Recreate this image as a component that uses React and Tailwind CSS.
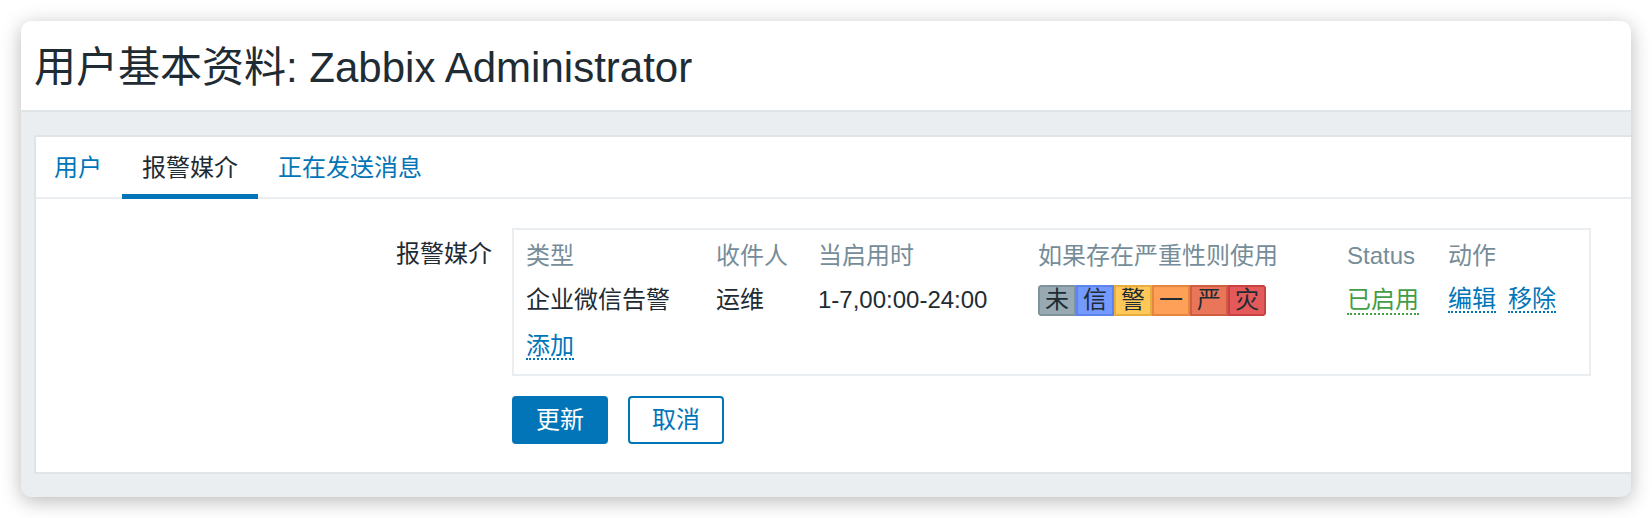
import React from "react";

const severities = [
  { label: "未", className: "bg-[#97aab3] border-[#7f939d]" },
  { label: "信", className: "bg-[#7499ff] border-[#5b84ee]" },
  { label: "警", className: "bg-[#ffc859] border-[#e8ad3f]" },
  { label: "一", className: "bg-[#ffa059] border-[#e5863f]" },
  { label: "严", className: "bg-[#e97659] border-[#cf5d41]" },
  { label: "灾", className: "bg-[#e45959] border-[#c94141]" },
];

const tabs = [
  { label: "用户", active: false },
  { label: "报警媒介", active: true },
  { label: "正在发送消息", active: false },
];

function SeverityBar() {
  return (
    <div className="inline-flex overflow-hidden rounded-[4px]">
      {severities.map((s) => (
        <span
          key={s.label}
          className={`flex h-[31px] w-[38px] items-center justify-center border-2 text-[24px] leading-[24px] text-[#1f2c33] ${s.className}`}
        >
          {s.label}
        </span>
      ))}
    </div>
  );
}

function MediaTable() {
  const row = "grid h-[44px] grid-cols-[190px_102px_220px_309px_101px_1fr] items-center";
  return (
    <div className="w-[1079px] border-2 border-[#ebeef0] bg-white pt-[4px] pl-[12px] pb-[2px]">
      <div className={`${row} text-[#768d99]`}>
        <span>类型</span>
        <span>收件人</span>
        <span>当启用时</span>
        <span>如果存在严重性则使用</span>
        <span>Status</span>
        <span>动作</span>
      </div>
      <div className={row}>
        <span>企业微信告警</span>
        <span>运维</span>
        <span>1-7,00:00-24:00</span>
        <span>
          <SeverityBar />
        </span>
        <span>
          <a className="cursor-pointer border-b-2 border-dotted border-[#429e47] text-[#429e47]">
            已启用
          </a>
        </span>
        <span className="flex gap-[12px]">
          <a className="cursor-pointer border-b-2 border-dotted border-[#0275b8] text-[#0275b8]">
            编辑
          </a>
          <a className="cursor-pointer border-b-2 border-dotted border-[#0275b8] text-[#0275b8]">
            移除
          </a>
        </span>
      </div>
      <div className="flex h-[50px] items-center">
        <a className="cursor-pointer border-b-2 border-dotted border-[#0275b8] text-[#0275b8]">
          添加
        </a>
      </div>
    </div>
  );
}

export default function App() {
  return (
    <div className="min-h-[518px] bg-white p-[21px] font-['Liberation_Sans','Noto_Sans_CJK_SC',sans-serif] text-[24px] leading-[24px] text-[#1f2c33]">
      <div className="overflow-hidden rounded-[10px] bg-[#ebeef0] shadow-[0_4px_20px_rgba(0,0,0,0.28)]">
        <header className="flex h-[91px] items-center border-b-2 border-[#dfe4e7] bg-white pt-[4px] pl-[13px]">
          <h1 className="text-[42px] leading-[42px] font-normal">
            用户基本资料: Zabbix Administrator
          </h1>
        </header>

        <div className="pt-[23px] pb-[23px] pl-[13px]">
          <div className="border-2 border-r-0 border-[#dfe4e7] bg-white">
            <nav className="flex border-b-2 border-[#ebeef0]">
              {tabs.map((tab, i) => (
                <a
                  key={tab.label}
                  className={`-mb-[2px] flex h-[62px] cursor-pointer items-center border-b-[5px] pt-[5px] ${
                    i === 0 ? "pr-5 pl-[18px]" : "px-5"
                  } ${
                    tab.active
                      ? "border-[#0275b8] text-[#1f2c33]"
                      : "border-transparent text-[#0275b8]"
                  }`}
                >
                  {tab.label}
                </a>
              ))}
            </nav>

            <div className="grid grid-cols-[456px_1fr] gap-x-[20px] gap-y-[20px] pt-[29px] pb-[28px]">
              <label className="pt-[14px] text-right">报警媒介</label>
              <MediaTable />
              <div />
              <div className="flex gap-[20px]">
                <button
                  type="button"
                  className="h-[48px] w-[96px] rounded-[4px] bg-[#0275b8] text-white"
                >
                  更新
                </button>
                <button
                  type="button"
                  className="h-[48px] w-[96px] rounded-[4px] border-2 border-[#0275b8] bg-white text-[#0275b8]"
                >
                  取消
                </button>
              </div>
            </div>
          </div>
        </div>
      </div>
    </div>
  );
}
